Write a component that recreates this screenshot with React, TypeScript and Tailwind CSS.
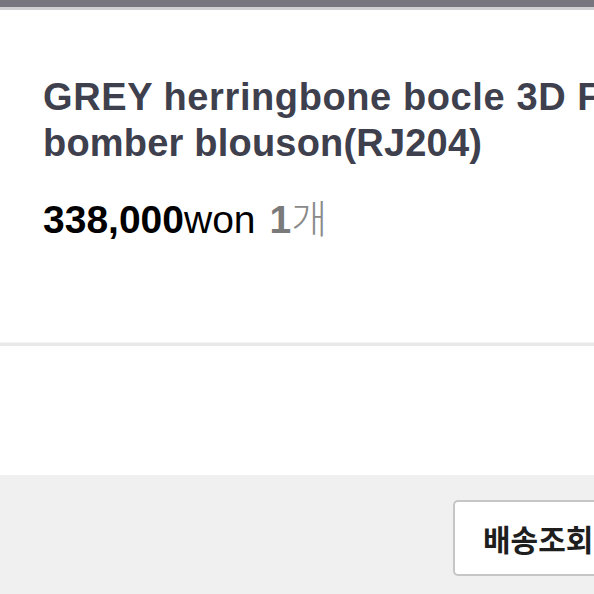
export default function App() {
  return (
    <div
      className="w-[594px] h-[594px] overflow-hidden bg-white flex flex-col"
      style={{ fontFamily: '"Liberation Sans", Arial, "Noto Sans CJK KR", sans-serif' }}
    >
      {/* top bars */}
      <div className="h-[7px] bg-[#77767e] shrink-0" />
      <div className="h-[3px] bg-[#d0d0d3] shrink-0" />

      {/* product info */}
      <div className="h-[332px] shrink-0 pl-[43px] pt-[64px]">
        <h1 className="text-[38px] leading-[46px] font-bold text-[#3e404d] whitespace-nowrap">
          <span className="tracking-[0.6px]">GREY herringbone bocle 3D Fur</span>
          <br />
          <span className="tracking-[0.2px]">bomber blouson(RJ204)</span>
        </h1>
        <p className="mt-[28px] text-[39px] leading-[44px] text-black whitespace-nowrap">
          <span className="font-bold">338,000</span>
          <span>won</span>
          <span className="ml-[14px] font-bold text-[#7a7a7a]">1</span>
          <span
            className="text-[#8a8a8a]"
            style={{ fontFamily: '"Noto Sans CJK KR", sans-serif', fontWeight: 300 }}
          >
            개
          </span>
        </p>
      </div>

      <div className="h-[1px] bg-[#f4f4f4] shrink-0" />
      <div className="h-[3px] bg-[#e9e9e9] shrink-0" />

      <div className="h-[129px] shrink-0 bg-white" />

      {/* bottom action bar */}
      <div className="flex-1 bg-[#f0f0f0] pt-[25px] pl-[453px]">
        <button
          className="h-[76px] w-[200px] shrink-0 rounded-[5px] border-2 border-[#c6c6c6] bg-white pl-[28px] text-left text-[30px] font-bold text-[#1e1e1e] whitespace-nowrap"
          style={{ fontFamily: '"Noto Sans CJK KR", sans-serif' }}
        >
          배송조회
        </button>
      </div>
    </div>
  );
}
